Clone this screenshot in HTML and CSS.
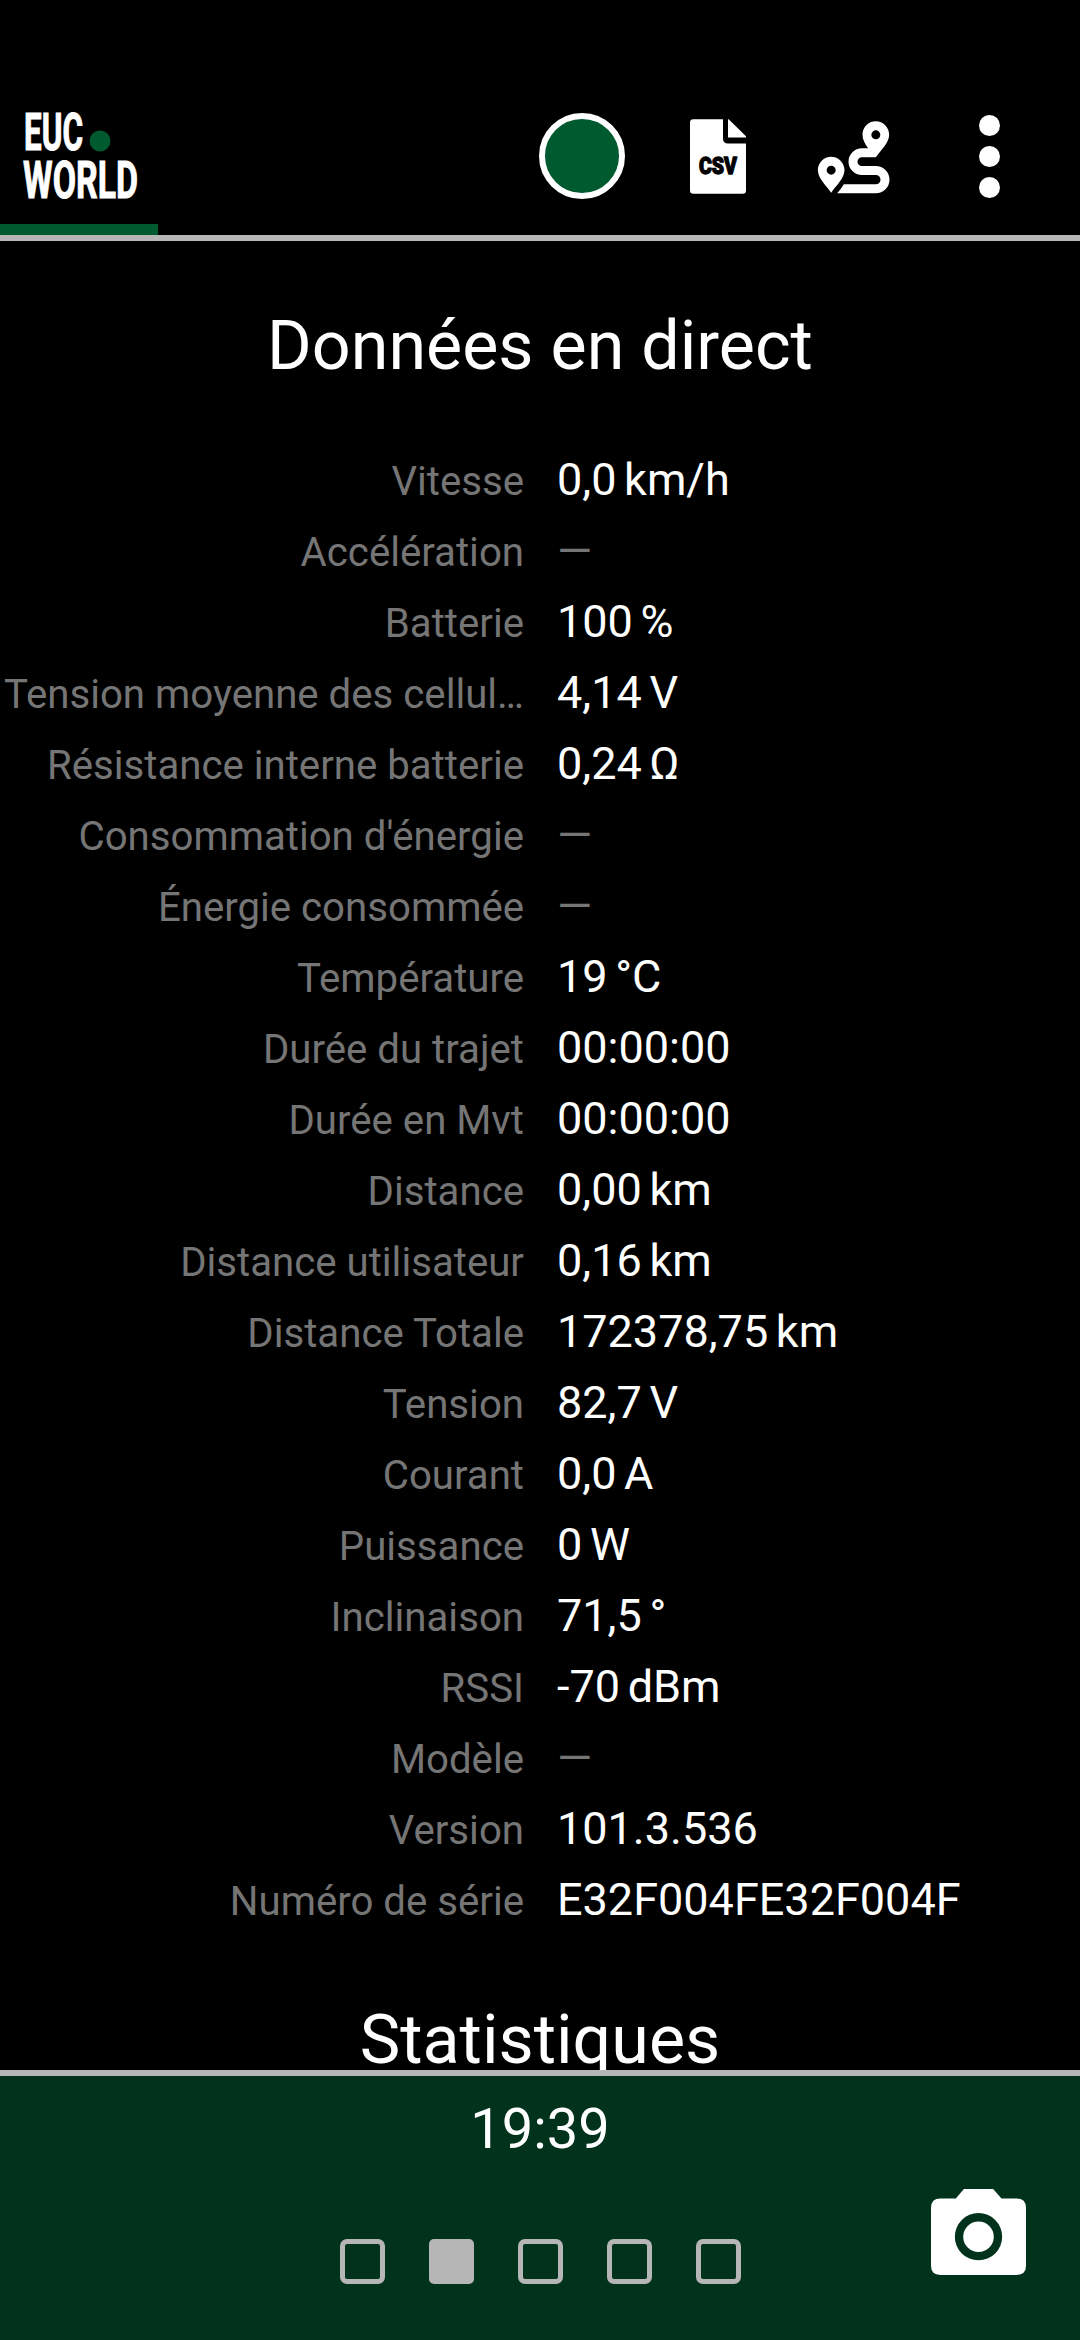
FILE: index.html
```html
<!DOCTYPE html>
<html lang="fr">
<head>
<meta charset="utf-8">
<title>EUC World</title>
<link rel="stylesheet" href="styles.css">
</head>
<body>
<div class="app">
  <header class="toolbar">
    <div class="brand">
      <svg class="logo" viewBox="0 0 120 92" aria-label="EUC World">
        <text class="logo-text" x="3" y="39.500" textLength="59" lengthAdjust="spacingAndGlyphs">EUC</text>
        <text class="logo-text" x="2" y="87.500" textLength="115" lengthAdjust="spacingAndGlyphs">WORLD</text>
        <circle class="logo-dot" cx="79" cy="31" r="10.500"/>
      </svg>
      <div class="brand-tab"></div>
    </div>
    <nav class="actions">
      <span class="record"></span>
      <svg class="icon-csv" viewBox="0 0 168 224">
        <path fill="#fff" d="M10 0H99V58Q99 73 114 73H168V214Q168 224 158 224H10Q0 224 0 214V10Q0 0 10 0Z"/>
        <path fill="#fff" d="M114 0H116L168 51V55H114Z"/>
        <text class="csv-text" x="27" y="165" textLength="114" lengthAdjust="spacingAndGlyphs">CSV</text>
      </svg>
      <svg class="icon-route" viewBox="110 91 218 219">
        <path fill="#fff" fill-rule="evenodd" d="M152 198C130 198 112 216 112 238C112 263 139 287 152 306C165 287 192 263 192 238C192 216 174 198 152 198ZM152 225a13.500 13.500 0 1 1 0 27a13.500 13.500 0 1 1 0-27Z"/>
        <path fill="#fff" fill-rule="evenodd" d="M286 92C263 92 246 110 246 132C246 147 254 160 263 173H244A40 40 0 0 0 244 253H286A14 14 0 0 1 286 281H190Q181 296 170 308H286A41 41 0 0 0 286 226H244A13 13 0 0 1 244 200H286C300 179 326 157 326 132C326 110 308 92 286 92ZM286 119a13.500 13.500 0 1 1 0 27a13.500 13.500 0 1 1 0-27Z"/>
      </svg>
      <span class="more"><i class="dot"></i><i class="dot"></i><i class="dot"></i></span>
    </nav>
  </header>

  <main class="content">
    <h1 class="title">Données en direct</h1>
    <dl class="data">
      <dt>Vitesse</dt><dd>0,0 km/h</dd>
      <dt>Accélération</dt><dd class="empty">—</dd>
      <dt>Batterie</dt><dd>100 %</dd>
      <dt>Tension moyenne des cellul…</dt><dd>4,14 V</dd>
      <dt>Résistance interne batterie</dt><dd>0,24 Ω</dd>
      <dt>Consommation d'énergie</dt><dd class="empty">—</dd>
      <dt>Énergie consommée</dt><dd class="empty">—</dd>
      <dt>Température</dt><dd>19 °C</dd>
      <dt>Durée du trajet</dt><dd>00:00:00</dd>
      <dt>Durée en Mvt</dt><dd>00:00:00</dd>
      <dt>Distance</dt><dd>0,00 km</dd>
      <dt>Distance utilisateur</dt><dd>0,16 km</dd>
      <dt>Distance Totale</dt><dd>172378,75 km</dd>
      <dt>Tension</dt><dd>82,7 V</dd>
      <dt>Courant</dt><dd>0,0 A</dd>
      <dt>Puissance</dt><dd>0 W</dd>
      <dt>Inclinaison</dt><dd>71,5 °</dd>
      <dt>RSSI</dt><dd>-70 dBm</dd>
      <dt>Modèle</dt><dd class="empty">—</dd>
      <dt>Version</dt><dd>101.3.536</dd>
      <dt>Numéro de série</dt><dd>E32F004FE32F004F</dd>
    </dl>
    <h2 class="title">Statistiques</h2>
  </main>

  <footer class="bottom">
    <time class="clock">19:39</time>
    <div class="controls">
      <div class="pager">
        <span class="page"></span><span class="page current"></span><span class="page"></span><span class="page"></span><span class="page"></span>
      </div>
      <svg class="icon-camera" viewBox="94 87 283 256">
        <path fill="#fff" fill-rule="evenodd" d="M192 87H279L304 115H349Q377 115 377 143V315Q377 343 349 343H122Q94 343 94 315V143Q94 115 122 115H168ZM235.500 158.500a70.500 70.500 0 1 0 0 141a70.500 70.500 0 1 0 0-141Z"/>
        <circle cx="235.500" cy="229" r="45.500" fill="#fff"/>
      </svg>
    </div>
  </footer>
</div>
</body>
</html>
```
FILE: styles.css
```css
* {
  box-sizing: border-box;
}

body {
  margin: 0;
  background: #000;
  color: #fff;
  font-family: Roboto, "Liberation Sans", sans-serif;
}

.app {
  display: flex;
  flex-direction: column;
  height: 2340px;
  width: 1080px;
  overflow: hidden;
}

.toolbar {
  display: flex;
  justify-content: space-between;
  flex: none;
  height: 241px;
  padding-top: 110px;
  border-bottom: 6px solid #b6b6b6;
}

.brand {
  display: flex;
  flex-direction: column;
  justify-content: space-between;
  width: 158px;
}

.logo {
  width: 120px;
  height: 92px;
  margin-left: 21px;
  overflow: visible;
}

.logo-text {
  fill: #fff;
  stroke: #fff;
  stroke-width: 1px;
  font-size: 51px;
  font-weight: 700;
}

.logo-dot {
  fill: #005a30;
}

.brand-tab {
  height: 11px;
  background: #005a30;
}

.actions {
  display: flex;
  align-items: center;
  height: 92px;
  padding-right: 80px;
}

.record {
  width: 86px;
  height: 86px;
  border: 6px solid #fff;
  border-radius: 50%;
  background: #005a30;
}

.icon-csv {
  width: 56px;
  height: 75px;
  margin-left: 65px;
}

.csv-text {
  fill: #000;
  stroke: #000;
  stroke-width: 4px;
  stroke-linejoin: round;
  font-size: 74px;
  font-weight: 900;
}

.icon-route {
  width: 73px;
  height: 73px;
  margin: 2px 0 0 71px;
}

.more {
  display: flex;
  flex-direction: column;
  gap: 10px;
  margin-left: 89px;
}

.dot {
  width: 21px;
  height: 21px;
  border-radius: 50%;
  background: #fff;
}

.content {
  flex: 1;
  min-height: 0;
  overflow: hidden;
}

.title {
  margin: 0;
  padding-top: 63px;
  font-size: 68.2px;
  font-weight: 400;
  line-height: 84px;
  text-align: center;
}

.data {
  display: grid;
  grid-template-columns: 524px 1fr;
  grid-auto-rows: 71px;
  column-gap: 33px;
  align-items: baseline;
  margin: 0;
  padding-top: 56px;
  line-height: 71px;
  white-space: nowrap;
}

.data dt {
  color: #757575;
  font-size: 40.2px;
  text-align: right;
}

.data dd {
  margin: 0;
  font-size: 45px;
  word-spacing: -3.5px;
}

.data .empty {
  color: #757575;
}

.bottom {
  display: flex;
  flex-direction: column;
  flex: none;
  height: 270px;
  border-top: 6px solid #b6b6b6;
  background: #00321c;
}

.clock {
  padding-top: 19px;
  font-size: 56px;
  line-height: 68px;
  text-align: center;
}

.controls {
  display: grid;
  grid-template-columns: 1fr auto 1fr;
  align-items: start;
  padding: 26px 54px 0;
}

.pager {
  display: flex;
  grid-column: 2;
  gap: 44px;
  padding-top: 50px;
}

.page {
  width: 45px;
  height: 45px;
  border: 5px solid #b6b6b6;
  border-radius: 7px;
}

.current {
  border-radius: 5px;
  background: #b6b6b6;
}

.icon-camera {
  width: 95px;
  height: 86px;
  justify-self: end;
}
```
